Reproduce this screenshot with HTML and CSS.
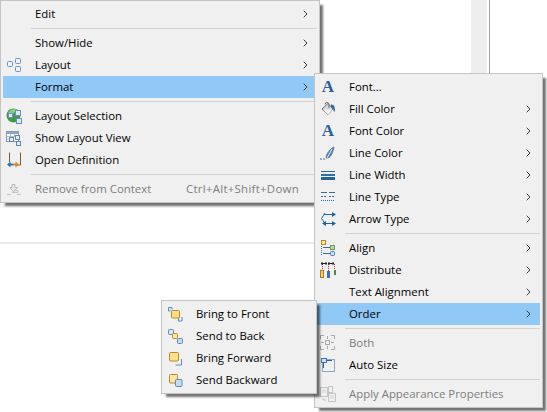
FILE: index.html
```html
<!DOCTYPE html>
<html>
<head>
<meta charset="utf-8">
<title>Context menu</title>
<link rel="stylesheet" href="styles.css">
</head>
<body>
<svg class="sprite" width="0" height="0">
<symbol id="chev" viewBox="0 0 5 8"><path d="M.7.7 4 4 .7 7.3" fill="none" stroke="#3c3c3c" stroke-width="1"/></symbol>
</svg>

<div class="desk">
<div class="strip"></div>
<div class="rule"></div>
<div class="band"></div>
<div class="divider"></div>

<div class="menu menu-main">
  <div class="row"><span class="ico"></span><span class="label">Edit</span><svg class="chev"><use href="#chev"/></svg></div>
  <div class="sep"></div>
  <div class="row"><span class="ico"></span><span class="label">Show/Hide</span><svg class="chev"><use href="#chev"/></svg></div>
  <div class="row"><svg class="ico" viewBox="0 0 16 16"><g fill="#eef3f9" stroke="#6a90b8"><rect x="1.5" y="4.5" width="5" height="5" rx="1"/><rect x="9.5" y="1.5" width="5" height="5" rx="1"/><rect x="9.5" y="9.5" width="5" height="5" rx="1"/></g></svg><span class="label">Layout</span><svg class="chev"><use href="#chev"/></svg></div>
  <div class="row on"><span class="ico"></span><span class="label">Format</span><svg class="chev"><use href="#chev"/></svg></div>
  <div class="sep"></div>
  <div class="row"><svg class="ico" viewBox="0 0 16 16"><circle cx="7.5" cy="7.5" r="7" fill="#3f9a4c"/><path d="M2 5a7 7 0 0 1 9-3.5L7 6z" fill="#8ccf7e"/><g fill="#dfe9f5" stroke="#6a90b8"><rect x="2.5" y="5.5" width="4" height="4"/><rect x="9.5" y="2.5" width="5" height="5"/><rect x="10.5" y="10.5" width="5" height="5"/></g></svg><span class="label">Layout Selection</span></div>
  <div class="row"><svg class="ico" viewBox="0 0 16 16"><rect x=".5" y="1.5" width="12" height="10" fill="#fff" stroke="#8b9bb0"/><path d="M1 2h11v2H1z" fill="#8ea6c4"/><path d="M1 6.500h11M1 9h5M4.500 4v7M8.500 4v3" stroke="#b5c0ce" fill="none"/><g fill="#e6eef8" stroke="#5d84ad"><rect x="3.500" y="7.500" width="4" height="4"/><rect x="9.500" y="5.500" width="4" height="4"/><rect x="10.500" y="11.500" width="4" height="4"/></g></svg><span class="label">Show Layout View</span></div>
  <div class="row"><svg class="ico" viewBox="0 0 16 16"><path d="M3.500 1v9M14.500 1v12H9" fill="none" stroke="#7c5a2c"/><path d="M3 1h1M14 1h1" stroke="#7c5a2c"/><path d="M1 12.500 4.500 9.500v2H7v2H4.500v2z" fill="#2f74b5"/><path d="M13 12.500 9.500 9.500v2H7v2h2.500v2z" fill="#d98a23"/></svg><span class="label">Open Definition</span></div>
  <div class="sep"></div>
  <div class="row off"><svg class="ico" viewBox="0 0 16 16"><path d="M1 13.500h4M11 13.500h4" stroke="#c4c4c4"/><path d="M6 3.500h3v3h2.500L7.500 11 4 6.500h2z" fill="#e8e8e8" stroke="#b9b9b9"/><path d="M9 9.500h3v2H6" fill="none" stroke="#c4c4c4"/></svg><span class="label">Remove from Context</span><span class="keys">Ctrl+Alt+Shift+Down</span></div>
</div>

<div class="menu menu-format">
  <div class="row"><span class="ico glyph">A</span><span class="label">Font...</span></div>
  <div class="row"><svg class="ico" viewBox="0 0 16 16"><path d="M2 8 8 2.500 13 8l-5 5.500z" fill="#d8d8d8" stroke="#6f6f6f"/><path d="M5 3.500a2 2 0 0 1 4 0V7" fill="none" stroke="#6f6f6f"/><path d="M3 8.500h9.500L8 13.500z" fill="#f4f4f4"/><path d="M11 3.500c3 0 4 2 4 6 0 1.500-1.500 1.500-1.500 0 0-2-1-3-2.500-3.500z" fill="#2c6aa3"/></svg><span class="label">Fill Color</span><svg class="chev"><use href="#chev"/></svg></div>
  <div class="row"><span class="ico glyph">A</span><span class="label">Font Color</span><svg class="chev"><use href="#chev"/></svg></div>
  <div class="row"><svg class="ico" viewBox="0 0 16 16"><path d="M0 14h2M3 14h2" stroke="#2f6ea5"/><path d="M6 13c0-4 4-9 8-11-1 5-3 10-6 11z" fill="#5f82ad" stroke="#35609a" stroke-width=".7"/><path d="M7 13 12 4" stroke="#e5edf6"/></svg><span class="label">Line Color</span><svg class="chev"><use href="#chev"/></svg></div>
  <div class="row"><svg class="ico" viewBox="0 0 16 16"><path d="M1 4h14v1H1z" fill="#2f6ea5"/><path d="M1 7h14v2H1z" fill="#2f6ea5"/><path d="M1 10h14v3H1z" fill="#20649c"/></svg><span class="label">Line Width</span><svg class="chev"><use href="#chev"/></svg></div>
  <div class="row"><svg class="ico" viewBox="0 0 16 16"><g fill="none" stroke="#2f6ea5"><path d="M1 3.500h6M9 3.500h6"/><path d="M1 7.500h6M9 7.500h6" stroke-dasharray="2 1"/><path d="M1 11.500h14" stroke-dasharray="1 1"/></g></svg><span class="label">Line Type</span><svg class="chev"><use href="#chev"/></svg></div>
  <div class="row"><svg class="ico" viewBox="0 0 16 16"><g fill="none" stroke="#20649c"><path d="M4 3.500h9M4 12.500h9"/><path d="M5 2 1.500 7.500 5 12.500" stroke-width="1"/></g><path d="M12 1l4 2.500-4 2.500zM12 10l4 2.500-4 2.500zM6 10l-4 2.500 4 2.500z" fill="#20649c"/></svg><span class="label">Arrow Type</span><svg class="chev"><use href="#chev"/></svg></div>
  <div class="sep"></div>
  <div class="row"><svg class="ico" viewBox="0 0 16 16"><rect x="1.500" y=".5" width="4" height="4" fill="#fbe6a6" stroke="#b98a1e"/><rect x="10.500" y="5.500" width="4" height="4" fill="#bcd8a4" stroke="#6d9c5a"/><rect x="10.500" y="11.500" width="4" height="4" rx="1" fill="#cfe0f3" stroke="#4f7fb2"/><path d="M1.500 6v10" stroke="#2f6ea5" stroke-dasharray="1 1"/><path d="M3 7.500h7M3 13.500h7" stroke="#2f6ea5"/></svg><span class="label">Align</span><svg class="chev"><use href="#chev"/></svg></div>
  <div class="row"><svg class="ico" viewBox="0 0 16 16"><path d="M2.500 2v6M8.500 2v7M14.500 2v6" stroke="#d22a2a" stroke-dasharray="1 1"/><path d="M1 1.500h6M8 1.500h6" stroke="#222"/><path d="M2 0v3M6 0v3M9 0v3M13 0v3" stroke="#222"/><rect x=".5" y="8.500" width="3" height="7" fill="#f4cf6e" stroke="#b3781a"/><rect x="7" y="9" width="3" height="7" fill="#3f6fb0"/><rect x="14" y="8" width="2" height="5" fill="#4d8a4f"/></svg><span class="label">Distribute</span><svg class="chev"><use href="#chev"/></svg></div>
  <div class="row"><span class="ico"></span><span class="label">Text Alignment</span><svg class="chev"><use href="#chev"/></svg></div>
  <div class="row on"><span class="ico"></span><span class="label">Order</span><svg class="chev"><use href="#chev"/></svg></div>
  <div class="sep"></div>
  <div class="row off"><svg class="ico" viewBox="0 0 16 16"><g fill="none" stroke="#a9a9a9"><path d="M.5 4V.5H4M11 .5h3.500V4M.5 11v3.500H4M11 14.500h3.500V11"/><rect x="5.500" y="5.500" width="4" height="4"/><path d="M7.500 1v3M7.500 11v3M1 7.500h3M11 7.500h3"/></g></svg><span class="label">Both</span></div>
  <div class="row"><svg class="ico" viewBox="0 0 16 16"><rect x="2.500" y="2.500" width="12" height="12" fill="none" stroke="#2b5f96" stroke-dasharray="1 1"/><rect x="1.500" y="1.500" width="5" height="4" fill="#cfe0f3" stroke="#3f74ad"/><path d="M7 3.500h5M3.500 6v5" stroke="#2b5f96"/></svg><span class="label">Auto Size</span></div>
  <div class="sep"></div>
  <div class="row off"><svg class="ico" viewBox="0 0 16 16"><g fill="#f2f2f2" stroke="#c4c4c4"><rect x=".5" y="1.500" width="7" height="9"/><rect x="8.500" y=".5" width="4" height="6"/><rect x="8.500" y="7.500" width="7" height="8"/></g><path d="M10 10h4M10 12h4M2 4h4M2 6h4" stroke="#cfcfcf"/><path d="M3 12v2h3" fill="none" stroke="#c4c4c4"/></svg><span class="label">Apply Appearance Properties</span></div>
</div>

<div class="menu menu-order">
  <div class="row"><svg class="ico" viewBox="0 0 16 16"><path d="M5 3.500V1.500H1.500V5h2" fill="#dbe7f5" stroke="#5d8abc"/><path d="M11.500 11.500V15H15V11" fill="none" stroke="#5d8abc"/><rect x="4.500" y="4.500" width="8" height="7.500" rx="1" fill="#fbdf8e" stroke="#b98a1e"/></svg><span class="label">Bring to Front</span></div>
  <div class="row"><svg class="ico" viewBox="0 0 16 16"><rect x="1.500" y="1.500" width="5" height="5" rx="1" fill="#dbe7f5" stroke="#5d8abc"/><rect x="5.500" y="5.500" width="5" height="5" rx="1" fill="#fbe6a6" stroke="#b98a1e"/><rect x="10.500" y="10.500" width="5" height="5" rx="1" fill="#c6d9f0" stroke="#5d8abc"/></svg><span class="label">Send to Back</span></div>
  <div class="row"><svg class="ico" viewBox="0 0 16 16"><path d="M14.500 9v6H8.500" fill="none" stroke="#5d8abc"/><rect x="2.500" y="2.500" width="9" height="8.500" rx="1" fill="#fbdf8e" stroke="#b98a1e"/></svg><span class="label">Bring Forward</span></div>
  <div class="row"><svg class="ico" viewBox="0 0 16 16"><rect x="2.500" y="2.500" width="8" height="8.500" rx="1" fill="#fbe6a6" stroke="#b98a1e"/><rect x="8.500" y="7.500" width="6.500" height="7" rx="1" fill="#c6d9f0" stroke="#5d8abc"/></svg><span class="label">Send Backward</span></div>
</div>
</div>
</body>
</html>
```
FILE: styles.css
```css
/* Desktop and the three open menus */

body
{ margin: 0;
background-color: #fff;
font-family: "Open Sans", "Noto Sans", sans-serif;
font-size: 11.4px;
color: #000;
}

.sprite
{ position: absolute;
}

.desk
{ position: relative;
width: 547px;
height: 412px;
overflow: hidden;
}

/* Window behind the menus */

.strip
{ position: absolute; left: 471px; top: 0;
width: 16px; height: 80px;
background-color: #eee;
}

.rule
{ position: absolute; left: 489px; top: 0;
width: 1px; height: 80px;
background-color: #a0a0a0;
}

.band
{ position: absolute; left: 0; top: 204px;
width: 316px; height: 4px;
background-color: #f6f6f6;
}

.divider
{ position: absolute; left: 0; top: 242px;
width: 316px; height: 2px;
background-color: #e9e9e9;
}

/* Menus */

.menu
{ position: absolute;
box-sizing: border-box;
padding: 2px;
background-color: #f0f0f0;
border: 1px solid #c4c4c4;
box-shadow: 4px 4px 2px -1px rgba(0,0,0,0.55);
}

.menu-main { left: 0; top: 0; width: 320px; z-index: 1; }
.menu-format { left: 314px; top: 73px; width: 229px; z-index: 2; }
.menu-order { left: 161px; top: 300px; width: 156px; z-index: 3; }

.row
{ display: flex;
align-items: center;
height: 22px;
padding: 0 9px 0 3px;
}

.row.on
{ background-color: #90c8f6;
}

.row.off .label, .row.off .keys
{ color: #7d7d7d;
}

.ico
{ flex: none;
width: 16px;
height: 16px;
margin-right: 13px;
}

.glyph
{ font-family: "Liberation Serif", serif;
font-size: 17px;
font-weight: bold;
line-height: 16px;
text-align: center;
color: #2d5e96;
}

.label
{ flex: 1;
padding-bottom: 2px;
white-space: nowrap;
}

.keys
{ margin-right: 9px;
padding-bottom: 2px;
letter-spacing: 0.3px;
white-space: nowrap;
}

.chev
{ flex: none;
width: 5px;
height: 8px;
}

.sep
{ height: 1px;
margin: 3px 0 3px 28px;
background-color: #d2d2d2;
}
```
